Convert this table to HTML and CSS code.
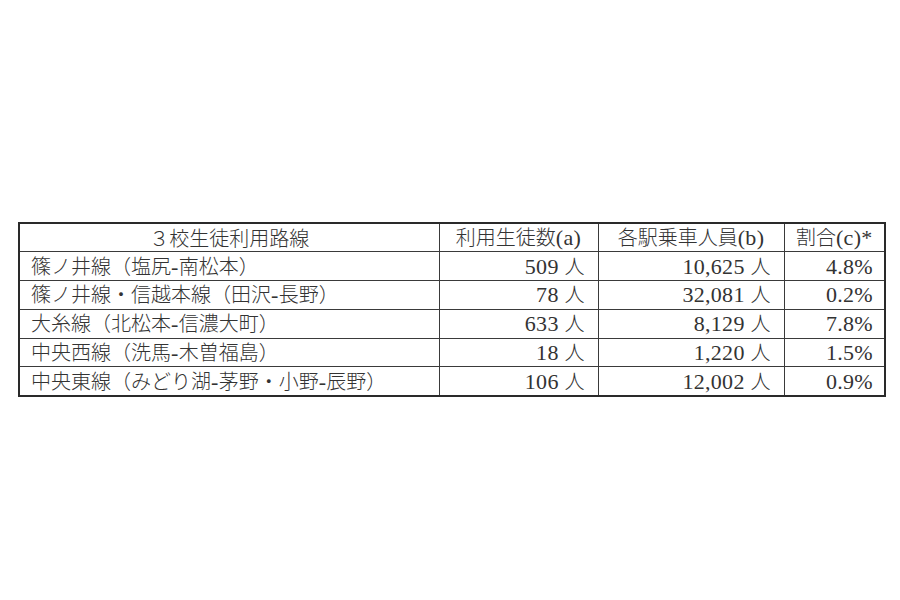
FILE: index.html
```html
<!DOCTYPE html>
<html lang="ja">
<head>
<meta charset="utf-8">
<link rel="stylesheet" href="styles.css">
</head>
<body>
<div class="page">
<table class="data">
<colgroup>
<col class="c1"><col class="c2"><col class="c3"><col class="c4">
</colgroup>
<thead>
<tr><th>３校生徒利用路線</th><th>利用生徒数<span class="n">(a)</span></th><th>各駅乗車人員<span class="n">(b)</span></th><th>割合<span class="n">(c)*</span></th></tr>
</thead>
<tbody>
<tr><td>篠ノ井線（塩尻<span class="n">-</span>南松本）</td><td class="num"><span class="n">509 </span>人</td><td class="num"><span class="n">10,625 </span>人</td><td class="num"><span class="n">4.8%</span></td></tr>
<tr><td>篠ノ井線・信越本線（田沢<span class="n">-</span>長野）</td><td class="num"><span class="n">78 </span>人</td><td class="num"><span class="n">32,081 </span>人</td><td class="num"><span class="n">0.2%</span></td></tr>
<tr><td>大糸線（北松本<span class="n">-</span>信濃大町）</td><td class="num"><span class="n">633 </span>人</td><td class="num"><span class="n">8,129 </span>人</td><td class="num"><span class="n">7.8%</span></td></tr>
<tr><td>中央西線（洗馬<span class="n">-</span>木曽福島）</td><td class="num"><span class="n">18 </span>人</td><td class="num"><span class="n">1,220 </span>人</td><td class="num"><span class="n">1.5%</span></td></tr>
<tr><td>中央東線（みどり湖<span class="n">-</span>茅野・小野<span class="n">-</span>辰野）</td><td class="num"><span class="n">106 </span>人</td><td class="num"><span class="n">12,002 </span>人</td><td class="num"><span class="n">0.9%</span></td></tr>
</tbody>
</table>
</div>
</body>
</html>
```
FILE: styles.css
```css
html, body {
  margin: 0;
  padding: 0;
  background: #fff;
}
.page {
  width: 900px;
  height: 600px;
  padding: 222px 0 0 18px;
  box-sizing: border-box;
}
.data {
  border-collapse: collapse;
  width: 866px;
  table-layout: fixed;
  font-family: "Noto Sans CJK JP", sans-serif;
  font-weight: 300;
  font-size: 20px;
  color: #333;
  border: 2px solid #2a2a2a;
}
.c1 { width: 420px; }
.c2 { width: 159px; }
.c3 { width: 186px; }
.c4 { width: 101px; }
.data th, .data td {
  border: 1px solid #3a3a3a;
  height: 28.8px;
  padding: 0 11px;
  line-height: 22px;
  box-sizing: border-box;
  white-space: nowrap;
  font-weight: 300;
  vertical-align: middle;
}
.data th {
  text-align: center;
}
.data td {
  text-align: left;
}
.data td.num {
  text-align: right;
  padding-right: 13px;
}
.data td.num:last-child {
  padding-right: 11px;
}
.n {
  font-family: "Liberation Serif", serif;
  font-size: 22px;
  line-height: 22px;
  letter-spacing: 0.3px;
  font-weight: normal;
  color: #333;
}
```
